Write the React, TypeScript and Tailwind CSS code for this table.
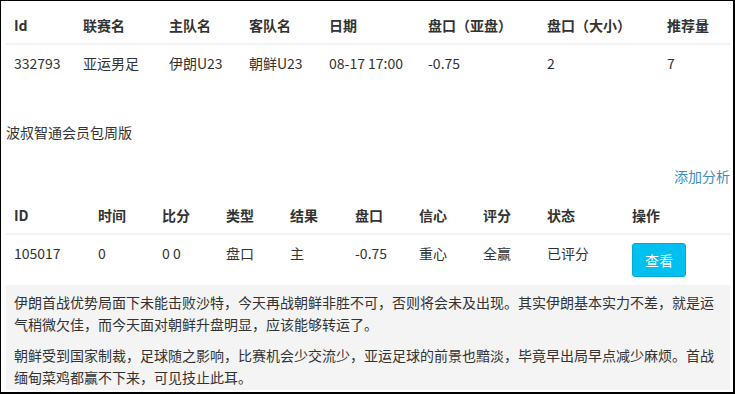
import React from "react";

const font = { fontFamily: '"Noto Sans CJK SC", "Noto Sans", sans-serif' };

const t1Cols = "grid grid-cols-[69px_86px_80px_80px_99px_119px_120px_70px]";
const t2Cols = "grid grid-cols-[84px_64px_64px_64px_65px_64px_64px_64px_85px_105px]";

export default function App() {
  const h1 = ["Id", "联赛名", "主队名", "客队名", "日期", "盘口（亚盘）", "盘口（大小）", "推荐量"];
  const r1 = ["332793", "亚运男足", "伊朗U23", "朝鲜U23", "08-17 17:00", "-0.75", "2", "7"];
  const h2 = ["ID", "时间", "比分", "类型", "结果", "盘口", "信心", "评分", "状态", "操作"];
  const r2 = ["105017", "0", "0 0", "盘口", "主", "-0.75", "重心", "全赢", "已评分"];
  return (
    <div
      className="w-[735px] h-[394px] overflow-hidden bg-white border-l border-t border-r-2 border-b-2 border-black text-[14px] leading-[20px] text-[#333]"
      style={font}
    >
      <div className="pl-[5px] pr-[3px] pt-[6px]">
        {/* table 1 */}
        <div className={`${t1Cols} border-b-2 border-[#f4f4f4] font-bold`}>
          {h1.map((h) => (
            <div key={h} className="p-2 whitespace-nowrap">{h}</div>
          ))}
        </div>
        <div className={t1Cols}>
          {r1.map((c, i) => (
            <div key={i} className="p-2 whitespace-nowrap">{c}</div>
          ))}
        </div>

        <div className="mt-[41px] h-[20px]">波叔智通会员包周版</div>
        <div className="mt-[24px] h-[20px] text-right text-[#3c8dbc]">添加分析</div>

        {/* table 2 */}
        <div className={`${t2Cols} mt-[11px] border-b-2 border-[#f4f4f4] font-bold`}>
          {h2.map((h) => (
            <div key={h} className="p-2 whitespace-nowrap">{h}</div>
          ))}
        </div>
        <div className={t2Cols}>
          {r2.map((c, i) => (
            <div key={i} className="p-2 whitespace-nowrap">{c}</div>
          ))}
          <div className="p-2">
            <button className="w-[54px] h-[34px] rounded-[3px] bg-[#00c0ef] border border-[#00acd6] text-white text-[14px] leading-[20px]">
              查看
            </button>
          </div>
        </div>

        <div className="h-[105px] overflow-hidden bg-[#f4f4f4] px-2 pt-[6px] leading-[22px]">
          <p>
            伊朗首战优势局面下未能击败沙特，今天再战朝鲜非胜不可，否则将会未及出现。其实伊朗基本实力不差，就是运气稍微欠佳，而今天面对朝鲜升盘明显，应该能够转运了。
          </p>
          <p className="mt-[9px]">
            朝鲜受到国家制裁，足球随之影响，比赛机会少交流少，亚运足球的前景也黯淡，毕竟早出局早点减少麻烦。首战缅甸菜鸡都赢不下来，可见技止此耳。
          </p>
        </div>
      </div>
    </div>
  );
}
